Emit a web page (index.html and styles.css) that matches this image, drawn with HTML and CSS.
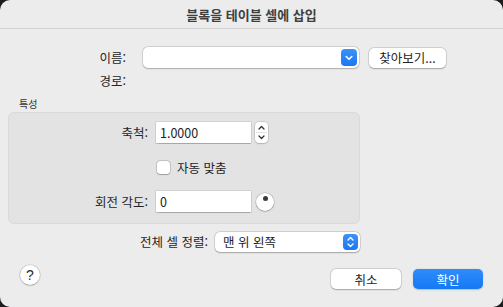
FILE: index.html
```html
<!DOCTYPE html>
<html lang="ko">
<head>
<meta charset="utf-8">
<link rel="stylesheet" href="styles.css">
</head>
<body>
<div class="window">
  <div class="titlebar">블록을 테이블 셀에 삽입</div>
  <div class="content">
    <div class="row row-name">
      <div class="label lbl-top">이름:</div>
      <div class="combo">
        <div class="combo-btn">
          <svg width="8" height="6" viewBox="0 0 8 6"><path d="M1.2 1.5 L4 4.3 L6.8 1.5" fill="none" stroke="#fff" stroke-width="1.6" stroke-linecap="round" stroke-linejoin="round"/></svg>
        </div>
      </div>
      <div class="btn btn-browse">찾아보기...</div>
    </div>
    <div class="row row-path">
      <div class="label lbl-top">경로:</div>
    </div>
    <div class="section-title">특성</div>
    <div class="group">
      <div class="row row-scale">
        <div class="label lbl-group">축척:</div>
        <div class="field">1.0000</div>
        <div class="stepper">
          <svg width="13" height="21" viewBox="0 0 13 21"><path d="M4 7 L6.5 4.5 L9 7" fill="none" stroke="#333" stroke-width="1.3" stroke-linecap="round" stroke-linejoin="round"/><line x1="1" y1="10.5" x2="12" y2="10.5" stroke="#e2e2e2" stroke-width="1"/><path d="M4 14 L6.5 16.5 L9 14" fill="none" stroke="#333" stroke-width="1.3" stroke-linecap="round" stroke-linejoin="round"/></svg>
        </div>
      </div>
      <div class="row row-check">
        <div class="checkbox"></div>
        <span class="check-label">자동 맞춤</span>
      </div>
      <div class="row row-rot">
        <div class="label lbl-group">회전 각도:</div>
        <div class="field">0</div>
        <div class="dial"><span class="dial-dot"></span></div>
      </div>
    </div>
    <div class="row row-align">
      <div class="label lbl-align">전체 셀 정렬:</div>
      <div class="popup">
        <span class="popup-text">맨 위 왼쪽</span>
        <div class="popup-btn">
          <svg width="9" height="14" viewBox="0 0 9 14"><path d="M2 5 L4.5 2.5 L7 5" fill="none" stroke="#fff" stroke-width="1.4" stroke-linecap="round" stroke-linejoin="round"/><path d="M2 9 L4.5 11.5 L7 9" fill="none" stroke="#fff" stroke-width="1.4" stroke-linecap="round" stroke-linejoin="round"/></svg>
        </div>
      </div>
    </div>
    <div class="row row-bottom">
      <div class="help">?</div>
      <div class="spacer"></div>
      <div class="btn btn-cancel">취소</div>
      <div class="btn btn-ok">확인</div>
    </div>
  </div>
</div>
</body>
</html>
```
FILE: styles.css
```css
* { box-sizing: border-box; }
html, body { margin: 0; padding: 0; }
body {
  background: #1c1c1e;
  width: 503px;
  height: 307px;
  overflow: hidden;
  font-family: "Noto Sans CJK KR", "Noto Sans", "Liberation Sans", sans-serif;
  font-size: 12.5px;
  color: #262626;
}
.window {
  width: 503px;
  height: 307px;
  background: #ececec;
  border-radius: 10px;
  overflow: hidden;
}
.titlebar {
  height: 29px;
  border-bottom: 1px solid #d2d2d2;
  display: flex;
  align-items: center;
  justify-content: center;
  font-weight: bold;
  font-size: 13px;
  color: #3f3f3f;
}
.content {
  display: flex;
  flex-direction: column;
}
.row {
  display: flex;
  align-items: center;
}
.label {
  text-align: right;
  flex: none;
}
.lbl-top { width: 126px; margin-right: 17px; }
.row-name { margin-top: 18px; height: 21px; }
.row-path { margin-top: 2px; height: 20px; }
.combo {
  width: 216px;
  height: 21px;
  background: #fff;
  border-radius: 5px;
  box-shadow: 0 0 0 0.5px rgba(0,0,0,0.18), 0 0.5px 1.5px rgba(0,0,0,0.2);
  display: flex;
  justify-content: flex-end;
  align-items: center;
  padding-right: 2px;
}
.combo-btn {
  width: 16px;
  height: 17px;
  border-radius: 4px;
  background: linear-gradient(#3a92fb, #1a78f2);
  display: flex;
  align-items: center;
  justify-content: center;
}
.btn {
  height: 20px;
  border-radius: 5px;
  background: #fff;
  box-shadow: 0 0 0 0.5px rgba(0,0,0,0.15), 0 0.5px 1.5px rgba(0,0,0,0.25);
  display: flex;
  align-items: center;
  justify-content: center;
  font-size: 12.5px;
  color: #262626;
}
.btn-browse { width: 77px; margin-left: 10px; }
.section-title {
  font-size: 10px;
  margin-left: 19px;
  margin-top: 7px;
  height: 15px;
  line-height: 13px;
  color: #333;
}
.group {
  margin: 0 0 0 8px;
  width: 352px;
  height: 112px;
  background: #e3e3e3;
  border: 1px solid #d9d9d9;
  border-radius: 6px;
  display: flex;
  flex-direction: column;
}
.lbl-group { width: 139px; margin-right: 8px; }
.row-scale { margin-top: 9px; height: 21px; }
.field {
  width: 95px;
  height: 21px;
  background: #fff;
  box-shadow: 0 0 0 0.5px rgba(0,0,0,0.15), 0 0.5px 1px rgba(0,0,0,0.2);
  padding-left: 4px;
  display: flex;
  align-items: center;
  color: #1d1d1d;
}
.stepper {
  margin-left: 4px;
  width: 13px;
  height: 21px;
  background: #fff;
  border-radius: 4px;
  box-shadow: 0 0 0 0.5px rgba(0,0,0,0.15), 0 0.5px 1.5px rgba(0,0,0,0.25);
  display: flex;
}
.row-check { margin-top: 17px; height: 14px; padding-left: 148px; }
.checkbox {
  width: 13px;
  height: 13px;
  background: #fff;
  border-radius: 3px;
  box-shadow: 0 0 0 0.5px rgba(0,0,0,0.25), 0 0.5px 1px rgba(0,0,0,0.2);
}
.check-label { margin-left: 7px; }
.row-rot { margin-top: 17px; height: 21px; }
.dial {
  margin-left: 5px;
  width: 18px;
  height: 18px;
  border-radius: 50%;
  background: #fff;
  box-shadow: 0 0 0 0.5px rgba(0,0,0,0.18), 0 0.5px 1.5px rgba(0,0,0,0.3);
  display: flex;
  justify-content: center;
  padding-top: 3px;
}
.dial-dot {
  width: 5px;
  height: 5px;
  border-radius: 50%;
  background: #3a3a3a;
}
.row-align { margin-top: 7px; height: 21px; }
.lbl-align { width: 208px; margin-right: 7px; }
.popup {
  width: 145px;
  height: 20px;
  background: #fff;
  border-radius: 5px;
  box-shadow: 0 0 0 0.5px rgba(0,0,0,0.15), 0 0.5px 1.5px rgba(0,0,0,0.25);
  display: flex;
  align-items: center;
  padding: 0 2px 0 8px;
}
.popup-text { flex: 1; color: #1d1d1d; }
.popup-btn {
  width: 15px;
  height: 16px;
  border-radius: 4px;
  background: linear-gradient(#3a92fb, #1a78f2);
  display: flex;
  align-items: center;
  justify-content: center;
}
.row-bottom { margin-top: 13px; height: 24px; padding-left: 20px; padding-right: 20px; align-items: flex-start; }
.help {
  width: 20px;
  height: 20px;
  border-radius: 50%;
  background: #fff;
  box-shadow: 0 0 0 0.5px rgba(0,0,0,0.15), 0 0.5px 1.5px rgba(0,0,0,0.3);
  display: flex;
  align-items: center;
  justify-content: center;
  font-family: "Liberation Sans", sans-serif;
  font-size: 14px;
  color: #2a2a2a;
}
.spacer { flex: 1; }
.btn-cancel { width: 70px; margin-top: 4px; }
.btn-ok {
  width: 70px;
  margin-top: 4px;
  margin-left: 12px;
  background: linear-gradient(#2f8cfb, #1479f5);
  color: #fff;
  box-shadow: 0 0.5px 1.5px rgba(0,0,0,0.2);
}
```
